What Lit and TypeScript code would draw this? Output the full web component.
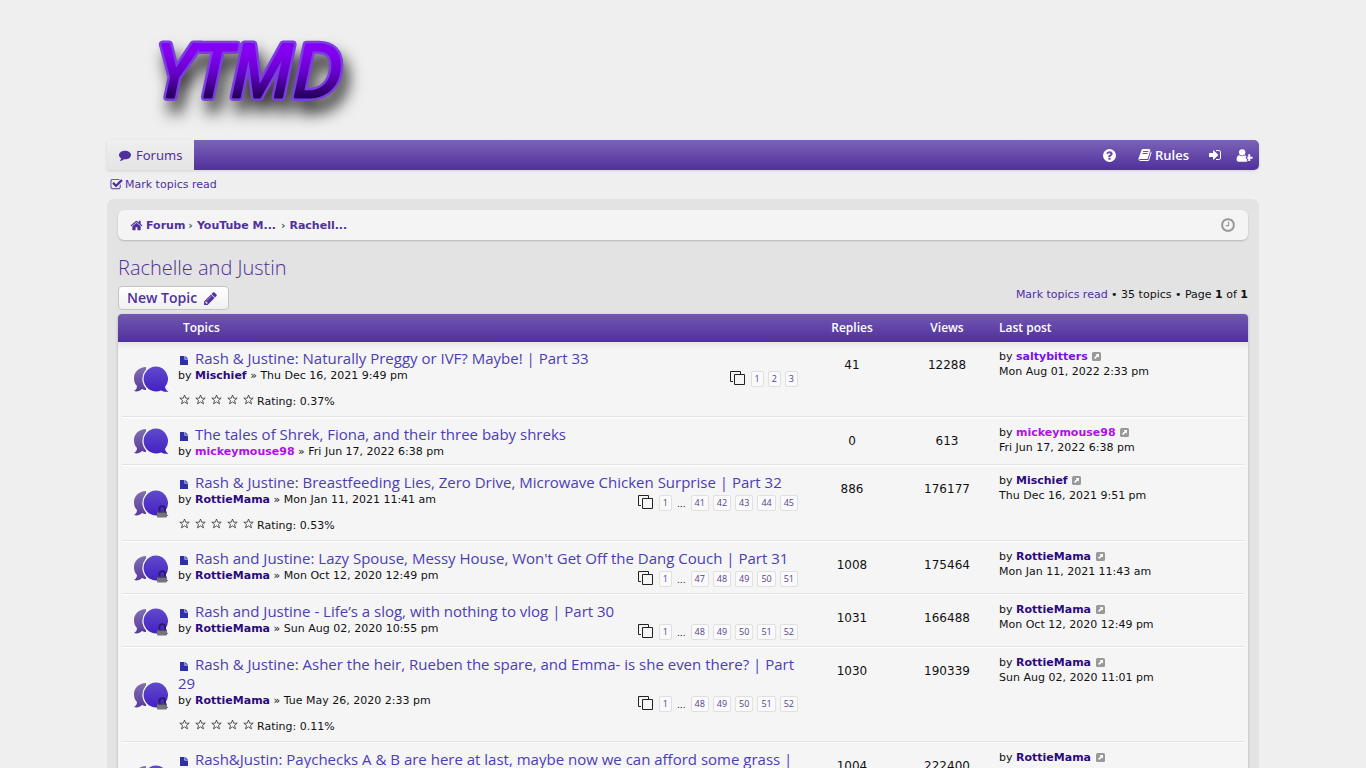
import { LitElement, html, css, svg, nothing } from 'lit';
import { customElement, property } from 'lit/decorators.js';
import { classMap } from 'lit/directives/class-map.js';

interface Topic {
  title: string;
  author: string;
  posted: string;
  pages: string[];
  rating?: string;
  replies: number;
  views: number;
  lastBy: string;
  lastDate: string;
  locked?: boolean;
}

const TOPICS: Topic[] = [
  {
    title: 'Rash & Justine: Naturally Preggy or IVF? Maybe! | Part 33',
    author: 'Mischief', posted: 'Thu Dec 16, 2021 9:49 pm',
    pages: ['1', '2', '3'], rating: '0.37%', replies: 41, views: 12288,
    lastBy: 'saltybitters', lastDate: 'Mon Aug 01, 2022 2:33 pm',
  },
  {
    title: 'The tales of Shrek, Fiona, and their three baby shreks',
    author: 'mickeymouse98', posted: 'Fri Jun 17, 2022 6:38 pm',
    pages: [], replies: 0, views: 613,
    lastBy: 'mickeymouse98', lastDate: 'Fri Jun 17, 2022 6:38 pm',
  },
  {
    title: 'Rash & Justine: Breastfeeding Lies, Zero Drive, Microwave Chicken Surprise | Part 32',
    author: 'RottieMama', posted: 'Mon Jan 11, 2021 11:41 am',
    pages: ['1', '...', '41', '42', '43', '44', '45'], rating: '0.53%', replies: 886, views: 176177,
    lastBy: 'Mischief', lastDate: 'Thu Dec 16, 2021 9:51 pm', locked: true,
  },
  {
    title: "Rash and Justine: Lazy Spouse, Messy House, Won't Get Off the Dang Couch | Part 31",
    author: 'RottieMama', posted: 'Mon Oct 12, 2020 12:49 pm',
    pages: ['1', '...', '47', '48', '49', '50', '51'], replies: 1008, views: 175464,
    lastBy: 'RottieMama', lastDate: 'Mon Jan 11, 2021 11:43 am', locked: true,
  },
  {
    title: 'Rash and Justine - Life’s a slog, with nothing to vlog | Part 30',
    author: 'RottieMama', posted: 'Sun Aug 02, 2020 10:55 pm',
    pages: ['1', '...', '48', '49', '50', '51', '52'], replies: 1031, views: 166488,
    lastBy: 'RottieMama', lastDate: 'Mon Oct 12, 2020 12:49 pm', locked: true,
  },
  {
    title: 'Rash & Justine: Asher the heir, Rueben the spare, and Emma- is she even there? | Part 29',
    author: 'RottieMama', posted: 'Tue May 26, 2020 2:33 pm',
    pages: ['1', '...', '48', '49', '50', '51', '52'], rating: '0.11%', replies: 1030, views: 190339,
    lastBy: 'RottieMama', lastDate: 'Sun Aug 02, 2020 11:01 pm', locked: true,
  },
  {
    title: 'Rash&Justin: Paychecks A & B are here at last, maybe now we can afford some grass | Part 28',
    author: 'RottieMama', posted: 'Sat Mar 21, 2020 4:12 pm',
    pages: ['1', '...', '47', '48', '49', '50', '51'], replies: 1004, views: 222400,
    lastBy: 'RottieMama', lastDate: 'Tue May 26, 2020 2:35 pm', locked: true,
  },
];

const USER_CLASS: Record<string, string> = {
  saltybitters: 'violet',
  mickeymouse98: 'magenta',
};

// every icon is drawn on a 1792 grid
const ICONS: Record<string, string> = {
  comment: 'M1792 896q0 174-120 321.5t-326 233-450 85.5q-70 0-145-8-198 175-460 242-49 14-114 22h-5q-15 0-27-10.5t-16-27.5v-1q-3-4-.5-12t2-10 4.5-9.5l6-9 7-8.5 8-9q7-8 31-34.5t34.5-38 31-39.5 32.5-51 27-59 26-76q-157-89-247.5-220t-90.5-281q0-130 71-248.5t191-204.5 286-136.5 348-50.5 348 50.5 286 136.5 191 204.5 71 248.5z',
  help: 'M1024 1376v-192q0-14-9-23t-23-9h-192q-14 0-23 9t-9 23v192q0 14 9 23t23 9h192q14 0 23-9t9-23zm256-672q0-88-55.5-163t-138.5-116-170-41q-243 0-400 213-15 25 8 43l132 100q7 6 19 6 16 0 25-12 53-68 86-92 34-24 86-24 48 0 85.5 26t37.5 59q0 38-20 61t-68 45q-63 28-115.5 86.5t-52.5 125.5v36q0 14 9 23t23 9h192q14 0 23-9t9-23q0-19 21.5-49.5t54.5-49.5q32-18 49-28.5t46-35 44.5-48 28-60.5 12.5-81zm384 192q0 209-103 385.5t-279.5 279.5-385.5 103-385.5-103-279.5-279.5-103-385.5 103-385.5 279.5-279.5 385.5-103 385.5 103 279.5 279.5 103 385.5z',
  book: 'M1703 478q40 57 18 129l-275 906q-19 64-76.5 107.5t-122.5 43.5h-923q-77 0-148.5-53.5t-99.5-131.5q-24-67-2-127 0-4 3-27t4-37q1-8-3-21.5t-3-19.5q2-11 8-21t16.5-23.5 16.5-23.5q23-38 45-91.5t30-91.5q3-10 .5-30t-.5-28q3-11 17-28t17-23q21-36 42-92t25-90q1-9-2.5-32t.5-28q4-13 22-30.5t22-22.5q19-26 42.5-84.5t27.5-96.5q1-8-3-25.5t-2-26.5q2-8 9-18t18-23 17-21q8-12 16.5-30.5t15-35 16-36 19.5-32 26.5-23.5 36-11.5 47.5 5.5l-1 3q38-9 51-9h761q74 0 114 56t18 130l-274 906q-36 119-71.5 153.5t-128.5 34.5h-869q-27 0-38 15-11 16-1 43 24 70 144 70h923q29 0 56-15.5t35-41.5l300-987q7-22 5-57 38 15 59 43zm-1064 2q-4 13 2 22.5t20 9.5h608q13 0 25.5-9.5t16.5-22.5l21-64q4-13-2-22.5t-20-9.5h-608q-13 0-25.5 9.5t-16.5 22.5zm-83 256q-4 13 2 22.5t20 9.5h608q13 0 25.5-9.5t16.5-22.5l21-64q4-13-2-22.5t-20-9.5h-608q-13 0-25.5 9.5t-16.5 22.5z',
  login: 'M1312 896q0 26-19 45l-544 544q-19 19-45 19t-45-19-19-45v-288h-448q-26 0-45-19t-19-45v-384q0-26 19-45t45-19h448v-288q0-26 19-45t45-19 45 19l544 544q19 19 19 45zm352-352v704q0 119-84.5 203.5t-203.5 84.5h-320q-13 0-22.5-9.5t-9.5-22.5q0-4-1-20t-.5-26.5 3-23.5 10-19.5 20.5-6.5h320q66 0 113-47t47-113v-704q0-66-47-113t-113-47h-312l-11.5-1-11.5-3-8-5.5-7-9-2-13.5q0-4-1-20t-.5-26.5 3-23.5 10-19.5 20.5-6.5h320q119 0 203.5 84.5t84.5 203.5z',
  register: 'M620 896a380 380 0 1 0 0-760 380 380 0 0 0 0 760zM1290 1030h-230v-90c-40-40-60-60-100-60-90 70-210 110-340 110s-250-40-340-110c-190 0-330 240-330 500 0 140 90 256 230 256h890c120 0 200-30 240-110h-120v-246h-0zM1340 760h240v280h280v240h-280v280h-240v-280h-280v-240h280z',
  check: 'M1472 930v318q0 119-84.5 203.5t-203.5 84.5h-832q-119 0-203.5-84.5t-84.5-203.5v-832q0-119 84.5-203.5t203.5-84.5h832q63 0 117 25 15 7 18 23 3 17-9 29l-49 49q-10 10-23 10-3 0-9-2-23-6-45-6h-832q-66 0-113 47t-47 113v832q0 66 47 113t113 47h832q66 0 113-47t47-113v-254q0-13 9-22l64-64q10-10 23-10 6 0 12 3 20 8 20 29zm231-489l-814 814q-24 24-57 24t-57-24l-430-430q-24-24-24-57t24-57l110-110q24-24 57-24t57 24l263 263 647-647q24-24 57-24t57 24l110 110q24 24 24 57t-24 57z',
  home: 'M1472 992v480q0 26-19 45t-45 19h-384v-384h-256v384h-384q-26 0-45-19t-19-45v-480q0-1 .5-3t.5-3l575-474 575 474q1 2 1 6zm223-69l-62 74q-8 9-21 11h-3q-13 0-21-7l-692-577-692 577q-12 8-24 7-13-2-21-11l-62-74q-8-10-7-23.5t11-21.5l719-599q32-26 76-26t76 26l244 204v-195q0-14 9-23t23-9h192q14 0 23 9t9 23v408l219 182q10 8 11 21.5t-7 23.5z',
  clock: 'M1024 544v448q0 14-9 23t-23 9h-320q-14 0-23-9t-9-23v-64q0-14 9-23t23-9h224v-352q0-14 9-23t23-9h64q14 0 23 9t9 23zm416 352q0-148-73-273t-198-198-273-73-273 73-198 198-73 273 73 273 198 198 273 73 273-73 198-198 73-273zm224 0q0 209-103 385.5t-279.5 279.5-385.5 103-385.5-103-279.5-279.5-103-385.5 103-385.5 279.5-279.5 385.5-103 385.5 103 279.5 279.5 103 385.5z',
  pencil: 'M491 1536l91-91-235-235-91 91v107h128v128h107zm523-928q0-22-22-22-10 0-17 7l-542 542q-7 7-7 17 0 22 22 22 10 0 17-7l542-542q7-7 7-17zm-54-192l416 416-832 832h-416v-416zm683 96q0 53-37 90l-166 166-416-416 166-165q36-38 90-38 53 0 91 38l235 234q37 39 37 91z',
};

@customElement('forum-icon')
export class ForumIcon extends LitElement {
  @property() name = '';
  @property({ type: Number }) size = 14;

  static styles = css`
    :host {
      display: inline-flex;
      flex: none;
    }
    svg {
      fill: currentColor;
      overflow: visible;
    }
  `;

  render() {
    return html`
      <svg width=${this.size} height=${this.size} viewBox="0 0 1792 1792" aria-hidden="true">
        <path d=${ICONS[this.name]}></path>
      </svg>
    `;
  }
}

@customElement('app-root')
export class AppRoot extends LitElement {
  static styles = css`
    :host {
      display: block;
      min-height: 100vh;
      background: #efefef;
      color: #111;
      font-family: 'DejaVu Sans', Verdana, sans-serif;
      font-size: 11px;
      line-height: 15px;
    }

    a {
      color: #50309c;
      text-decoration: none;
    }
    a:hover {
      text-decoration: underline;
    }

    .wrap {
      max-width: 1152px;
      margin: 0 auto;
    }

    .logo {
      display: block;
      height: 140px;
    }
    .logo-text {
      font: italic 400 74px 'Open Sans', sans-serif;
      fill: url(#logo-fill);
      stroke: url(#logo-fill);
      stroke-width: 3px;
      stroke-linejoin: round;
    }
    .logo-edge {
      fill: #7b3fe0;
      stroke: #7b3fe0;
      stroke-width: 8px;
      filter: drop-shadow(5px 12px 8px rgba(0, 0, 0, 0.8));
    }

    .navbar {
      display: flex;
      height: 30px;
      border-radius: 0 5px 5px 0;
      background: linear-gradient(#7b63b7, #50309c);
      box-shadow: 0 1px 3px rgba(0, 0, 0, 0.12);
      font-family: 'Open Sans', sans-serif;
      font-size: 13px;
    }
    .tab {
      display: flex;
      align-items: center;
      gap: 5px;
      padding: 0 12px;
      background: linear-gradient(#efefef, #e4e4e4);
      font-family: 'Noto Sans', sans-serif;
    }
    .nav-right {
      display: flex;
      align-items: center;
      margin-left: auto;
      padding-right: 7px;
    }
    .nav-right a {
      display: flex;
      align-items: center;
      gap: 3px;
      color: #fff;
      font-weight: 600;
    }
    .nav-help {
      margin-right: 21px;
    }
    .nav-rules {
      margin-right: 19px;
    }
    .nav-login {
      margin-right: 15px;
    }

    .subnav {
      display: flex;
      align-items: center;
      height: 29px;
      padding-left: 3px;
    }
    .subnav a {
      display: flex;
      align-items: center;
      gap: 2px;
    }

    .panel {
      padding: 11px;
      border-radius: 7px;
      background: #e3e3e3;
    }

    .crumbs {
      display: flex;
      align-items: center;
      height: 30px;
      padding: 0 12px;
      border-radius: 6px;
      background: #f4f4f4;
      box-shadow: 0 1px 2px rgba(0, 0, 0, 0.2);
      font-weight: 700;
    }
    .crumbs a {
      display: flex;
      align-items: center;
      gap: 3px;
    }
    .crumb-cut {
      min-width: 81px;
    }
    .sep {
      padding: 0 4px 0 3px;
      color: #555;
    }
    .clock {
      margin-left: auto;
      color: #999;
    }

    h1 {
      margin: 14px 0 4px;
      color: #50309c;
      font: 300 20px/28px 'Open Sans', sans-serif;
    }

    .actions {
      display: flex;
      justify-content: space-between;
      align-items: flex-start;
      margin-bottom: 4px;
    }
    .summary {
      padding-top: 1px;
    }
    .new-topic {
      display: flex;
      align-items: center;
      gap: 6px;
      height: 24px;
      padding: 0 10px 0 8px;
      border: 1px solid #c4c4c4;
      border-radius: 4px;
      background: linear-gradient(#fff, #f0f0f0);
      color: #50309c;
      font: 600 14px/20px 'Open Sans', sans-serif;
    }

    .topics {
      width: 100%;
      border-collapse: separate;
      border-spacing: 0;
      table-layout: fixed;
      border-radius: 4px 4px 0 0;
      background: #f5f5f5;
      box-shadow: 0 1px 3px rgba(0, 0, 0, 0.25);
    }
    .topics th {
      height: 28px;
      padding: 0;
      background: linear-gradient(#7158b2, #50309c);
      color: #fff;
      font: 600 12px/16px 'Open Sans', sans-serif;
      text-align: center;
    }
    .topics th:first-child {
      border-top-left-radius: 4px;
    }
    .topics th:last-child {
      border-top-right-radius: 4px;
    }
    .topics .left {
      padding-left: 5px;
      text-align: left;
    }
    .col-icon {
      width: 60px;
    }
    .col-replies {
      width: 96px;
    }
    .col-views {
      width: 94px;
    }
    .col-last {
      width: 249px;
    }

    tbody tr {
      background: linear-gradient(#e2e2e2 50%, #fff 50%) bottom center / calc(100% - 8px) 2px no-repeat;
    }
    tbody tr:first-child {
      background:
        linear-gradient(#e2e2e2 50%, #fff 50%) bottom center / calc(100% - 8px) 2px no-repeat,
        linear-gradient(#e6e6e6, #f5f5f5) top / 100% 8px no-repeat;
    }
    td {
      padding: 7px 0;
      vertical-align: top;
    }
    .cell-icon {
      vertical-align: middle;
    }
    .cell-icon svg {
      display: block;
      margin-left: 14px;
    }
    .cell-topic {
      padding-right: 6px;
    }
    .cell-num {
      padding-top: 16px;
      font-size: 12px;
      text-align: center;
    }
    .cell-last {
      padding-left: 5px;
    }

    .title {
      color: #4b3db4;
      font: 400 15px/19px 'Open Sans', sans-serif;
    }
    .file {
      margin: 0 3px 0 2px;
      vertical-align: -2px;
    }
    .meta {
      display: flex;
      justify-content: space-between;
    }
    .meta.paged {
      min-height: 20px;
    }
    .meta.rated {
      min-height: 26px;
    }
    .user {
      color: #2c0a7d;
      font-weight: 700;
    }
    .user.violet {
      color: #7a10e8;
    }
    .user.magenta {
      color: #b010e8;
    }
    .goto {
      margin-left: 1px;
      vertical-align: -1px;
    }

    .pages {
      display: flex;
      gap: 4px;
      align-items: flex-start;
      padding-top: 3px;
    }
    .page {
      padding: 0 3px;
      border: 1px solid #e0e0e0;
      border-radius: 2px;
      background: #fafafa;
      color: #55428f;
      font: 400 9px/14px 'Open Sans', sans-serif;
    }
    .dots {
      padding: 0 1px;
      font-size: 9px;
      line-height: 18px;
      height: 16px;
    }
    .pages .stack {
      margin-right: 2px;
    }

    .rating {
      display: flex;
      height: 17px;
    }
    .stars {
      display: flex;
      gap: 4px;
      margin-right: 3px;
    }
  `;

  private renderUser(name: string) {
    return html`<a href="#" class="user ${USER_CLASS[name] ?? ''}">${name}</a>`;
  }

  private renderBubbles(locked = false) {
    return html`
      <svg width="38" height="30" viewBox="0 0 38 30" aria-hidden="true">
        <path d="M14 2C7 2 2 7 2 13c0 4 1 6 3 8 0 2-1 4-3 5 3 1 6 0 8-2 2 1 3 1 4 1z" fill="url(#bubble-back)"></path>
        <path d="M24 1.500a12.500 12.500 0 1 0 5 24c3 1.500 5 1.500 7.500 1-2-1-3-2.500-3.500-4.500A12.500 12.500 0 0 0 24 1.500z" fill="url(#bubble-front)" stroke="#f5f5f5" stroke-width="2.500" paint-order="stroke"></path>
        ${locked ? svg`
          <path d="M27.500 23v-3a2.800 2.800 0 0 1 5.600 0v3" fill="none" stroke="#2b1a66" stroke-width="1.800"></path>
          <rect x="25" y="22.500" width="10" height="6" rx="1" fill="#77737d"></rect>
          <path d="M25.500 23h9" stroke="#2b1a66"></path>
        ` : nothing}
      </svg>
    `;
  }

  private renderPages(pages: string[]) {
    return html`
      <div class="pages">
        <svg class="stack" width="15" height="15" viewBox="0 0 15 15" fill="none" stroke="#222">
          <path d="M4.500 3.500h10v10h-10zM3 10.500h-2.500v-10h10v2.500"></path>
        </svg>
        ${pages.map((p) => p === '...'
          ? html`<span class="dots">...</span>`
          : html`<a class="page" href="#">${p}</a>`)}
      </div>
    `;
  }

  private renderRating(rating: string) {
    return html`
      <div class="rating">
        <span class="stars">
          ${[0, 1, 2, 3, 4].map(() => html`
            <svg width="12" height="12" viewBox="0 0 12 12" fill="none" stroke="#333" stroke-width=".8">
              <path d="M6.500 1l1.200 3.200h3.500l-2.700 2.200 1 3.500-3-2-3 2 1-3.500-2.700-2.200h3.500z"></path>
            </svg>`)}
        </span>
        <span>Rating: ${rating}</span>
      </div>
    `;
  }

  private renderTopic(t: Topic) {
    const meta = { meta: true, paged: t.pages.length > 0, rated: !!t.rating };
    return html`
      <tr>
        <td class="cell-icon">${this.renderBubbles(t.locked)}</td>
        <td class="cell-topic">
          <div class="title">
            <svg class="file" width="8" height="11" viewBox="0 0 8 11" fill="#2f2fa8">
              <path d="M0 1h4.500v3.500H8V10H0zM5.300 1L8 3.700H5.300z"></path>
            </svg>
            <a class="title" href="#">${t.title}</a>
          </div>
          <div class=${classMap(meta)}>
            <span>by ${this.renderUser(t.author)} » ${t.posted}</span>
            ${t.pages.length ? this.renderPages(t.pages) : nothing}
          </div>
          ${t.rating ? this.renderRating(t.rating) : nothing}
        </td>
        <td class="cell-num">${t.replies}</td>
        <td class="cell-num">${t.views}</td>
        <td class="cell-last">
          by ${this.renderUser(t.lastBy)}
          <a href="#" aria-label="View the latest post"><svg class="goto" width="9" height="9" viewBox="0 0 9 9">
            <rect width="9" height="9" rx="1.500" fill="#999"></rect>
            <path d="M3.500 2H7v3.500L5.900 4.400 3.200 7 2 5.800l2.700-2.600z" fill="#fff"></path>
          </svg></a><br>
          ${t.lastDate}
        </td>
      </tr>
    `;
  }

  render() {
    return html`
      <div class="wrap">
        <a class="logo" href="#">
          <svg width="260" height="140" viewBox="0 0 260 140">
            <defs>
              <linearGradient id="logo-fill" x1="0" y1="0" x2="0" y2="1">
                <stop offset=".35" stop-color="#8400f0"></stop>
                <stop offset=".55" stop-color="#6400c8"></stop>
                <stop offset=".78" stop-color="#25005c"></stop>
              </linearGradient>
              <linearGradient id="bubble-back" x1="0" y1="0" x2="0" y2="1">
                <stop offset="0" stop-color="#8070b0"></stop>
                <stop offset="1" stop-color="#5a3a9c"></stop>
              </linearGradient>
              <linearGradient id="bubble-front" x1="0" y1="0" x2="0" y2="1">
                <stop offset="0" stop-color="#5f4acb"></stop>
                <stop offset="1" stop-color="#4420c4"></stop>
              </linearGradient>
            </defs>
            <text class="logo-text logo-edge" x="49" y="97" aria-hidden="true">YTMD</text>
            <text class="logo-text" x="49" y="97">YTMD</text>
          </svg>
        </a>

        <nav class="navbar">
          <a class="tab" href="#"><forum-icon name="comment" size="12"></forum-icon>Forums</a>
          <div class="nav-right">
            <a class="nav-help" href="#" aria-label="FAQ"><forum-icon name="help" size="15"></forum-icon></a>
            <a class="nav-rules" href="#"><forum-icon name="book" size="14"></forum-icon>Rules</a>
            <a class="nav-login" href="#" aria-label="Login"><forum-icon name="login" size="14"></forum-icon></a>
            <a href="#" aria-label="Register"><forum-icon name="register" size="15"></forum-icon></a>
          </div>
        </nav>

        <div class="subnav">
          <a href="#"><forum-icon name="check" size="13"></forum-icon>Mark topics read</a>
        </div>

        <main class="panel">
          <nav class="crumbs">
            <a href="#"><forum-icon name="home" size="13"></forum-icon>Forum</a>
            <span class="sep">›</span>
            <a class="crumb-cut" href="#">YouTube M...</a>
            <span class="sep">›</span>
            <a href="#">Rachell...</a>
            <forum-icon class="clock" name="clock" size="16"></forum-icon>
          </nav>

          <h1>Rachelle and Justin</h1>

          <div class="actions">
            <button class="new-topic">New Topic <forum-icon name="pencil" size="15"></forum-icon></button>
            <span class="summary"><a href="#">Mark topics read</a> • 35 topics • Page <b>1</b> of <b>1</b></span>
          </div>

          <table class="topics">
            <thead>
              <tr>
                <th class="col-icon"></th>
                <th class="left">Topics</th>
                <th class="col-replies">Replies</th>
                <th class="col-views">Views</th>
                <th class="col-last left">Last post</th>
              </tr>
            </thead>
            <tbody>
              ${TOPICS.map((t) => this.renderTopic(t))}
            </tbody>
          </table>
        </main>
      </div>
    `;
  }
}
